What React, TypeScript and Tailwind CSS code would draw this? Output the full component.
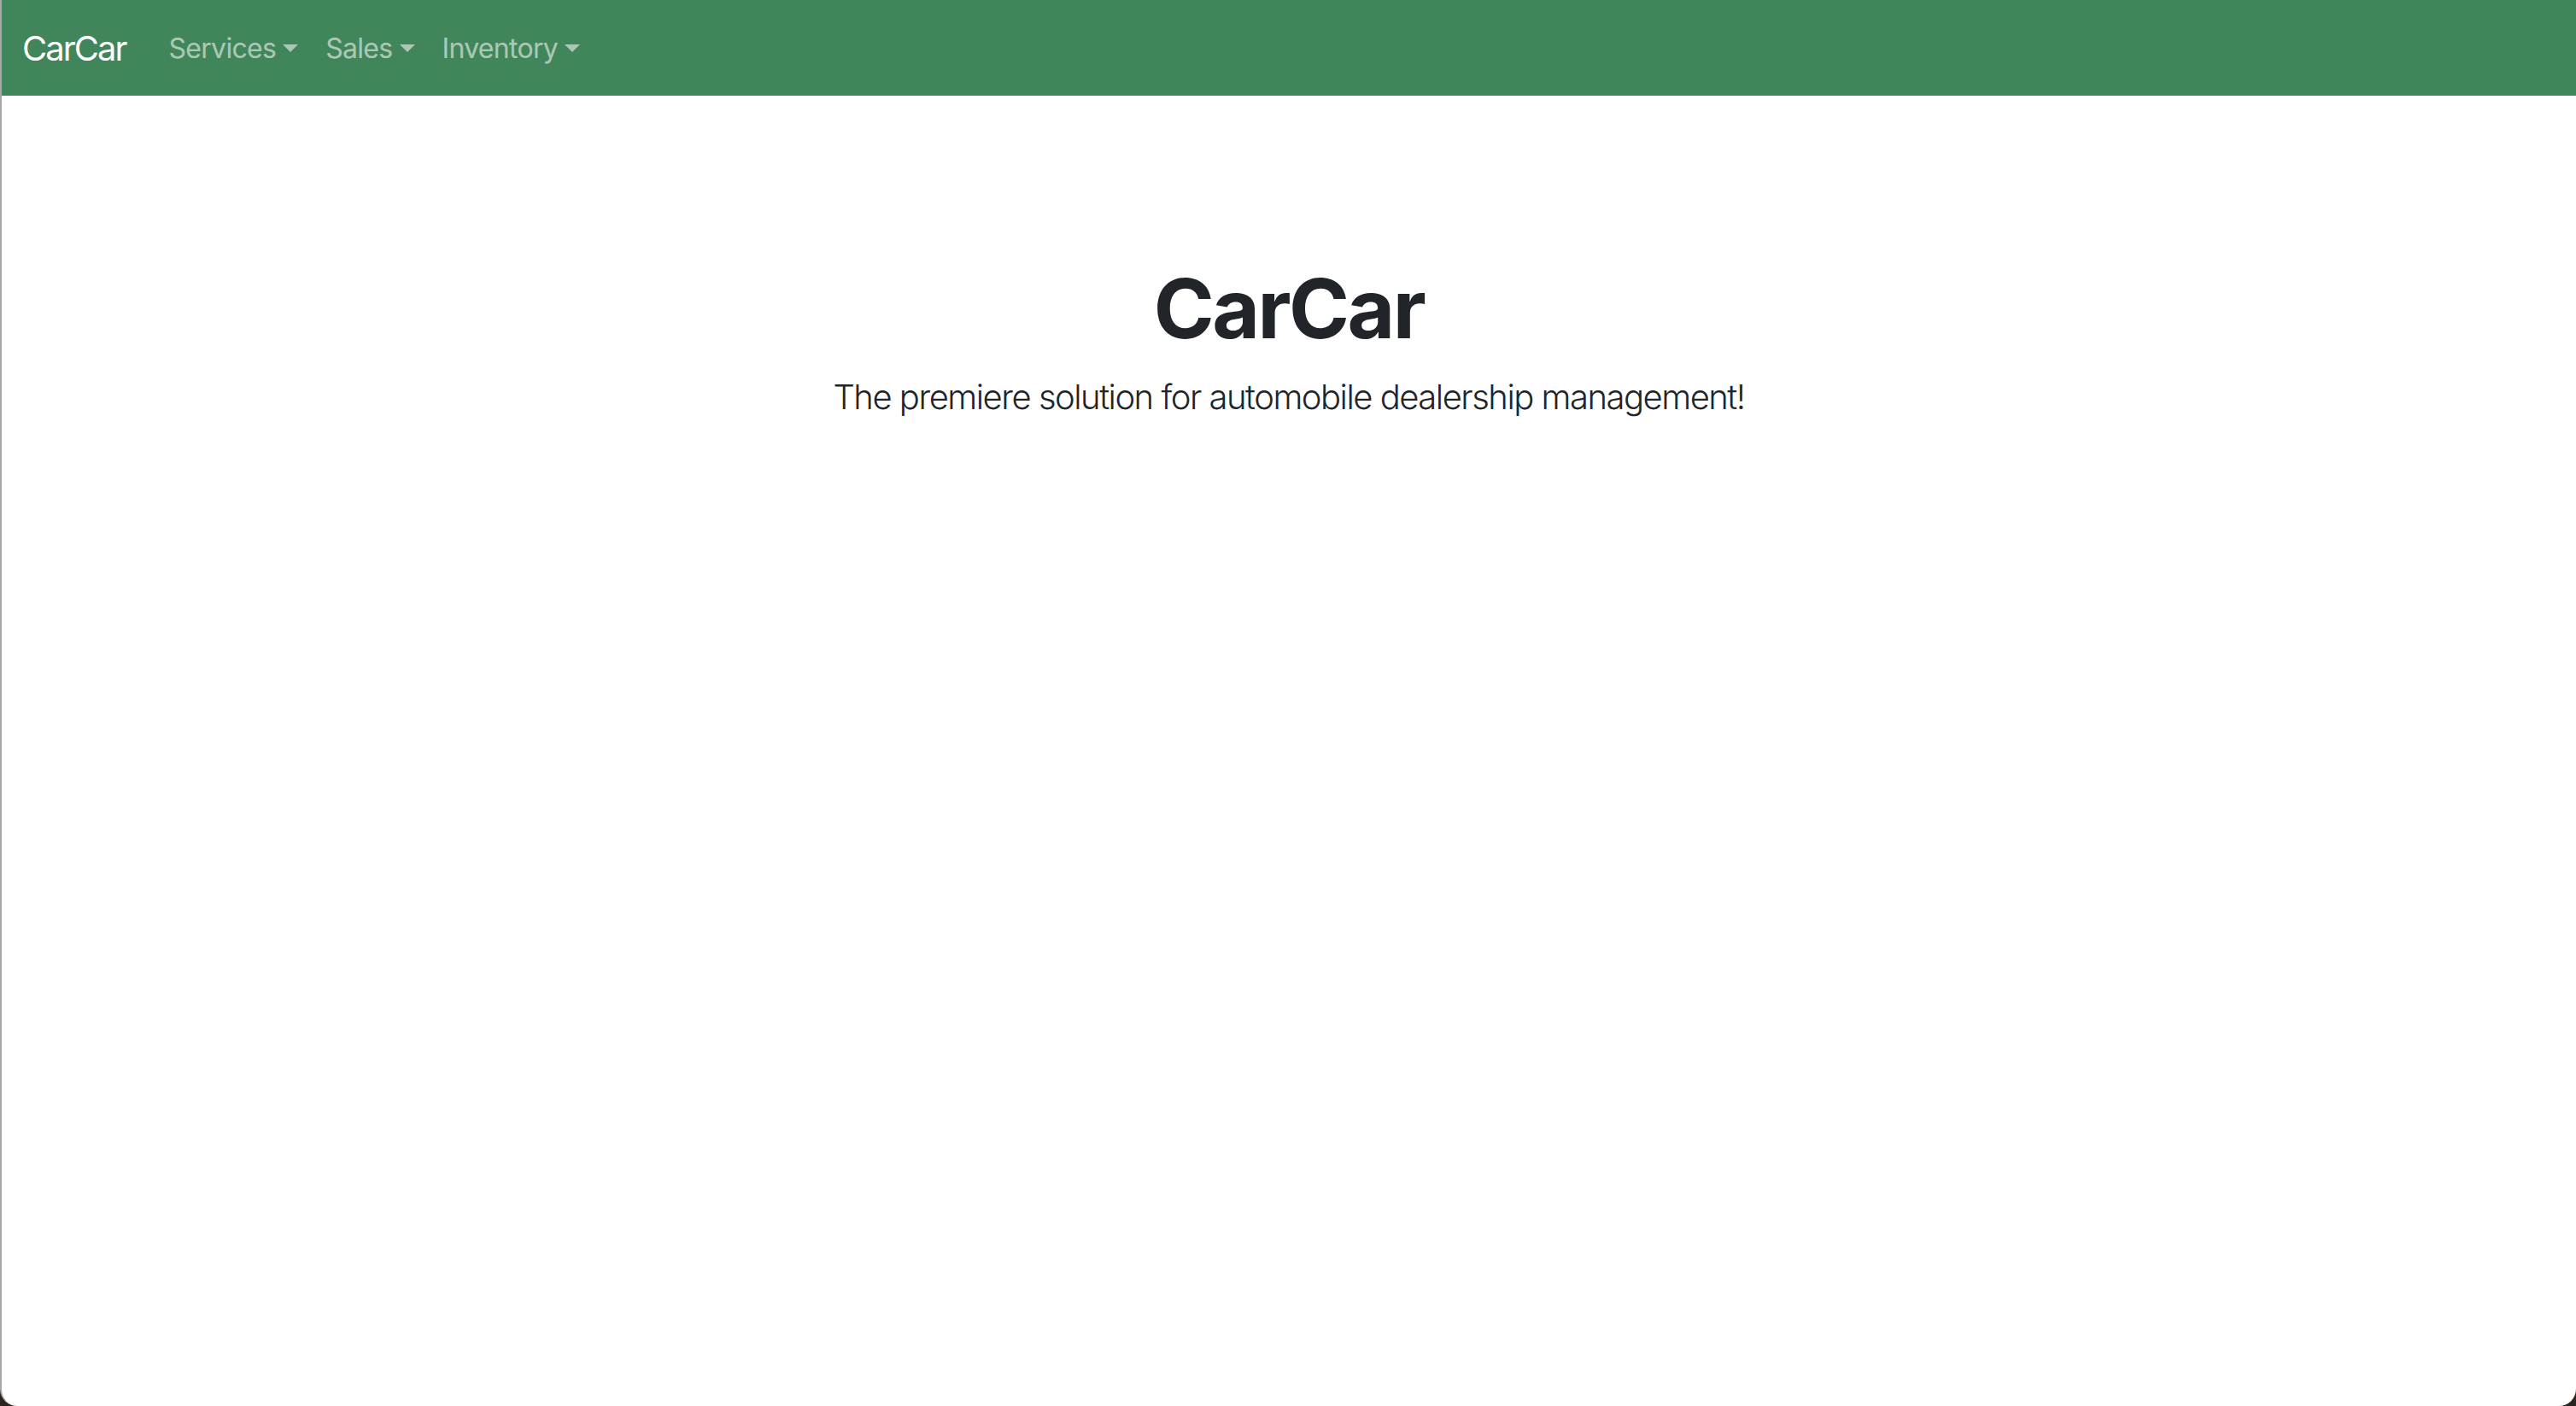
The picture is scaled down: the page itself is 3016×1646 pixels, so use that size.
function Caret() {
  return (
    <span className="ml-[8px] inline-block h-0 w-0 border-x-[9px] border-t-[9px] border-x-transparent border-t-current align-[7px]" />
  );
}

function NavItem({ label }: { label: string }) {
  return (
    <a href="#" className="px-[16px] py-[16px] text-[32px] leading-[48px] tracking-[-0.7px] text-white/55 hover:text-white/75">
      {label}
      <Caret />
    </a>
  );
}

export default function App() {
  return (
    <div className="h-screen w-full bg-[#2b2522] font-['Inter',sans-serif]">
      <div className="flex h-full w-full flex-col overflow-hidden rounded-b-[20px] border-l-2 border-[#a8a8a8] bg-white">
        {/* Navbar */}
        <nav className="flex h-[112px] shrink-0 items-center bg-[#41865a] px-[24px] pt-[2px]">
          <a href="#" className="mr-[34px] text-[40px] leading-[60px] tracking-[-2px] text-white">
            CarCar
          </a>
          <div className="flex items-center">
            <NavItem label="Services" />
            <NavItem label="Sales" />
            <NavItem label="Inventory" />
          </div>
        </nav>

        {/* Hero */}
        <div className="mt-[96px] px-[48px] py-[96px] text-center text-[#212529]">
          <h1 className="mb-[16px] text-[96px] font-bold leading-[1.2] tracking-[-2.5px]">CarCar</h1>
          <div className="mx-auto w-1/2">
            <p className="mb-[48px] text-[40px] font-light leading-[1.5] tracking-[-1.5px]">
              The premiere solution for automobile dealership management!
            </p>
          </div>
        </div>
      </div>
    </div>
  );
}
